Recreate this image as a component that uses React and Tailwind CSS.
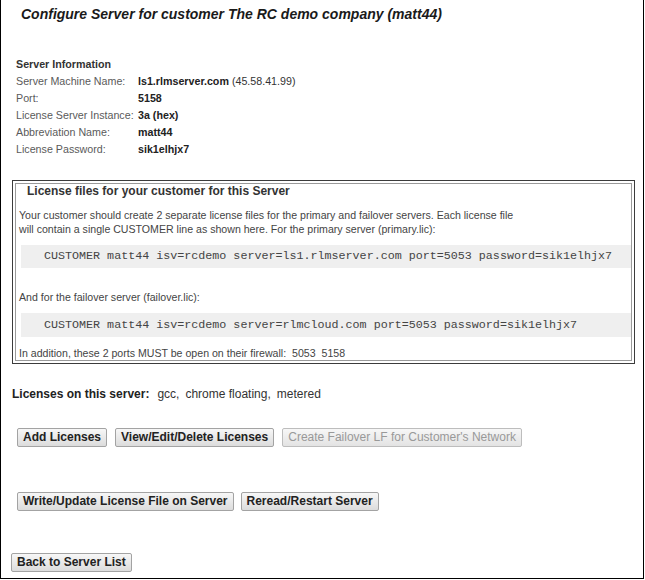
import React from "react";

const btn =
  "h-[19px] px-[5px] border border-[#a3a3a3] rounded-[2px] bg-gradient-to-b from-[#f7f7f7] to-[#dcdcdc] text-[12px] leading-[15px] font-bold text-[#222] whitespace-nowrap";
const btnDisabled =
  "h-[19px] px-[5px] border border-[#bdbdbd] rounded-[2px] bg-gradient-to-b from-[#f7f7f7] to-[#e3e3e3] text-[12px] leading-[15px] font-normal text-[#999] whitespace-nowrap";

const rows = [
  ["Server Machine Name:", "ls1.rlmserver.com", " (45.58.41.99)"],
  ["Port:", "5158", ""],
  ["License Server Instance:", "3a (hex)", ""],
  ["Abbreviation Name:", "matt44", ""],
  ["License Password:", "sik1elhjx7", ""],
];

export default function App() {
  return (
    <div className="w-[645px] h-[580px] bg-white font-['Liberation_Sans',Arial,sans-serif] text-[#222]">
      <div className="w-[644px] h-[579px] border-l border-r border-b border-black flex flex-col">
        <h1 className="pl-[20px] pt-[6px] text-[14px] leading-[16px] font-bold italic text-[#1a1a1a]">
          Configure Server for customer The RC demo company (matt44)
        </h1>

        <div className="mt-[34px] pl-[15px] text-[10.7px]">
          <div className="h-[17px] leading-[17px] font-bold text-[#333]">Server Information</div>
          {rows.map(([label, value, extra]) => (
            <div key={label} className="grid grid-cols-[122px_auto] h-[17px] leading-[17px]">
              <span className="text-[#5a5a5a]">{label}</span>
              <span className="text-[#222]">
                <span className="font-bold">{value}</span>
                {extra && <span className="text-[#333]">{extra}</span>}
              </span>
            </div>
          ))}
        </div>

        <div className="mt-[22px] ml-[11px] w-[623px] border border-[#3c3c3c] p-[2px]">
          <div className="border border-[#9a9a9a] flex flex-col">
            <div className="pl-[11px] text-[12px] leading-[14px] font-bold text-[#333]">
              License files for your customer for this Server
            </div>
            <p className="mt-[10px] pl-[3px] text-[10.6px] leading-[14px] text-[#444]">
              Your customer should create 2 separate license files for the primary and failover servers. Each license file
              <br />
              will contain a single CUSTOMER line as shown here. For the primary server (primary.lic):
            </p>
            <div className="mt-[9px] ml-[5px] h-[23px] bg-[#efefef] pl-[23px] font-['Liberation_Mono','Courier_New',monospace] text-[11.7px] leading-[23px] text-[#444] whitespace-nowrap">
              CUSTOMER matt44 isv=rcdemo server=ls1.rlmserver.com port=5053 password=sik1elhjx7
            </div>
            <p className="mt-[22px] pl-[3px] text-[10.6px] leading-[14px] text-[#444]">
              And for the failover server (failover.lic):
            </p>
            <div className="mt-[9px] ml-[5px] h-[24px] bg-[#efefef] pl-[23px] font-['Liberation_Mono','Courier_New',monospace] text-[11.7px] leading-[24px] text-[#444] whitespace-nowrap">
              CUSTOMER matt44 isv=rcdemo server=rlmcloud.com port=5053 password=sik1elhjx7
            </div>
            <p className="mt-[9px] pl-[3px] text-[10.6px] leading-[14px] text-[#444]">
              In addition, these 2 ports MUST be open on their firewall:&nbsp; 5053&nbsp; 5158
            </p>
          </div>
        </div>

        <div className="mt-[23px] pl-[11px] text-[12px] leading-[14px] flex">
          <span className="font-bold text-[#222]">Licenses on this server:</span>
          <span className="ml-[8px] text-[#333]">gcc,</span>
          <span className="ml-[6px] text-[#333]">chrome floating,</span>
          <span className="ml-[6px] text-[#333]">metered</span>
        </div>

        <div className="mt-[27px] pl-[16px] flex gap-[8px]">
          <button className={btn}>Add Licenses</button>
          <button className={btn}>View/Edit/Delete Licenses</button>
          <button className={btnDisabled} disabled>
            Create Failover LF for Customer's Network
          </button>
        </div>

        <div className="mt-[45px] pl-[16px] flex gap-[7px]">
          <button className={btn}>Write/Update License File on Server</button>
          <button className={btn}>Reread/Restart Server</button>
        </div>

        <div className="mt-[42px] pl-[10px] flex">
          <button className={btn}>Back to Server List</button>
        </div>
      </div>
    </div>
  );
}
